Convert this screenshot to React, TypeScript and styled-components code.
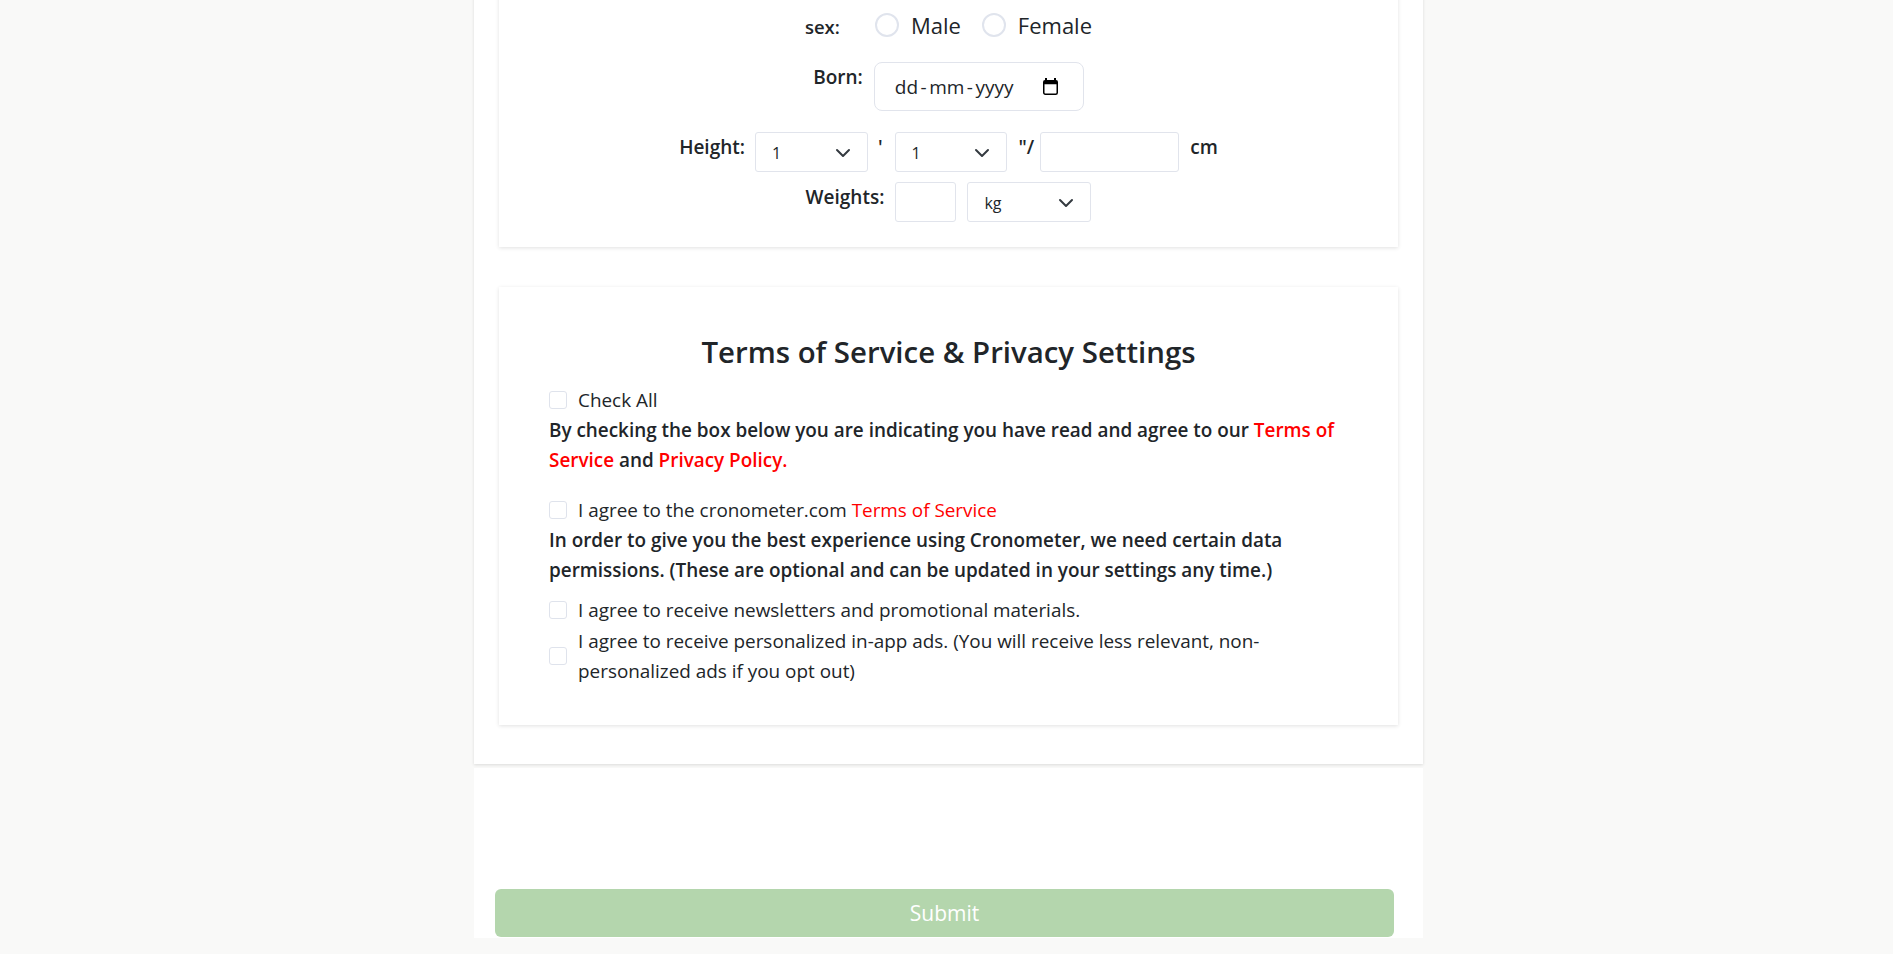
import React from "react";
import styled, { createGlobalStyle } from "styled-components";

const GlobalStyle = createGlobalStyle`
  html, body { margin: 0; padding: 0; }
  body {
    background: #f9f9f8;
    font-family: "Open Sans", "Noto Sans", Arial, sans-serif;
    color: #212529;
    overflow: hidden;
  }
  * { box-sizing: border-box; }
`;

const Page = styled.main`
  display: flex;
  flex-direction: column;
  align-items: center;
  margin-top: -20px;
  padding-left: 4px;
`;

const Panel = styled.section`
  width: 949px;
  background: #fff;
  box-shadow: 0 1px 3px rgba(0, 0, 0, 0.12);
  padding: 0 25px 39px;
`;

const Card = styled.div<{ $mt?: number }>`
  background: #fff;
  box-shadow: 0 1px 4px rgba(0, 0, 0, 0.12);
  margin-top: ${(p) => p.$mt ?? 0}px;
`;

const ProfileCard = styled(Card)`
  padding: 20px 0 25px;
`;

const Row = styled.div<{ $mt?: number }>`
  display: flex;
  justify-content: center;
  align-items: flex-start;
  margin-top: ${(p) => p.$mt ?? 0}px;
`;

const SexRow = styled(Row)`
  align-items: center;
  height: 50px;
`;

const Label = styled.span<{ $mr?: number; $ml?: number }>`
  font-size: 19px;
  font-weight: 600;
  line-height: 27px;
  padding-top: 2px;
  margin-right: ${(p) => p.$mr ?? 10}px;
  margin-left: ${(p) => p.$ml ?? 0}px;
  white-space: pre;
`;

const SexLabel = styled(Label)`
  font-size: 18.5px;
  padding-top: 0;
  margin-right: 35px;
  margin-top: 3px;
`;

const RadioOption = styled.label<{ $mr?: number }>`
  display: flex;
  align-items: center;
  gap: 12px;
  margin-right: ${(p) => p.$mr ?? 0}px;
  font-size: 22px;
  font-weight: 500;
`;

const RadioCircle = styled.span`
  width: 24px;
  height: 24px;
  border-radius: 50%;
  border: 2px solid #e0e4ed;
  background: #fff;
`;

const DateBox = styled.div`
  width: 210px;
  height: 49px;
  border: 1px solid #e1e4ec;
  border-radius: 8px;
  display: flex;
  align-items: center;
  justify-content: space-between;
  padding: 0 24px 0 20px;
  font-size: 19px;
  color: #212529;
`;

const DateSep = styled.span`
  margin: 0 2.5px;
`;

const SelectBox = styled.div<{ $w: number }>`
  width: ${(p) => p.$w}px;
  height: 40px;
  border: 1px solid #e1e4ec;
  border-radius: 3px;
  display: flex;
  align-items: center;
  justify-content: space-between;
  padding: 1px 16px 0 16px;
  font-size: 16px;
  color: #212529;
`;

const TextBox = styled.div<{ $w: number; $mr?: number }>`
  width: ${(p) => p.$w}px;
  height: 40px;
  border: 1px solid #e1e4ec;
  border-radius: 3px;
  margin-right: ${(p) => p.$mr ?? 0}px;
`;

const TermsCard = styled(Card)`
  padding: 47px 50px 39px;
`;

const Title = styled.h2`
  margin: 0 0 15px;
  text-align: center;
  font-size: 29.4px;
  font-weight: 600;
  line-height: 36px;
  color: #212529;
`;

const CheckRow = styled.label<{ $mt?: number }>`
  display: flex;
  align-items: center;
  margin-top: ${(p) => p.$mt ?? 0}px;
  font-size: 18.9px;
  line-height: 30px;
  color: #212529;
`;

const CheckBox = styled.span`
  flex: none;
  width: 18px;
  height: 18px;
  border: 1px solid #dfe3ec;
  border-radius: 3px;
  margin-right: 11px;
  background: #fff;
`;

const Notice = styled.p`
  margin: 0;
  font-size: 18.9px;
  font-weight: 600;
  line-height: 30px;
  color: #212529;
`;

const Red = styled.span`
  color: #ff0000;
`;

const Footer = styled.div`
  width: 949px;
  height: 170px;
  margin-top: 4px;
  background: #fff;
  display: flex;
  align-items: flex-end;
  padding: 0 0 1px 21px;
`;

const SubmitButton = styled.button`
  width: 899px;
  height: 48px;
  border: none;
  border-radius: 6px;
  background: #b4d6ad;
  color: #fff;
  font-family: "Open Sans", sans-serif;
  font-size: 21px;
  cursor: default;
`;

const Chevron = () => (
  <svg width="16" height="16" viewBox="0 0 16 16" fill="none">
    <path d="m2 5 6 6 6-6" stroke="#343a40" strokeWidth="2" strokeLinecap="round" strokeLinejoin="round" />
  </svg>
);

const CalendarIcon = () => (
  <svg width="17" height="17" viewBox="0 0 17 17">
    <rect x="3" y="0" width="2" height="3" fill="#000" />
    <rect x="12" y="0" width="2" height="3" fill="#000" />
    <rect x="1.75" y="2.75" width="13.5" height="13.5" rx="1.5" fill="none" stroke="#000" strokeWidth="1.5" />
    <rect x="1.75" y="2.75" width="13.5" height="3.5" fill="#000" />
  </svg>
);

export default function App() {
  return (
    <>
      <GlobalStyle />
      <Page>
        <Panel>
          <ProfileCard>
            <SexRow>
              <SexLabel>sex:</SexLabel>
              <RadioOption $mr={21}>
                <RadioCircle />
                Male
              </RadioOption>
              <RadioOption>
                <RadioCircle />
                Female
              </RadioOption>
            </SexRow>
            <Row $mt={12}>
              <Label $mr={11}>Born:</Label>
              <DateBox>
                <span>
                  dd<DateSep>-</DateSep>mm<DateSep>-</DateSep>yyyy
                </span>
                <CalendarIcon />
              </DateBox>
            </Row>
            <Row $mt={21}>
              <Label>Height:</Label>
              <SelectBox $w={113}>
                <span>1</span>
                <Chevron />
              </SelectBox>
              <Label $ml={10} $mr={12}>'</Label>
              <SelectBox $w={112}>
                <span>1</span>
                <Chevron />
              </SelectBox>
              <Label $ml={12} $mr={6}>"/</Label>
              <TextBox $w={139} />
              <Label $ml={11} $mr={0}>cm</Label>
            </Row>
            <Row $mt={10}>
              <Label $mr={11}>Weights:</Label>
              <TextBox $w={61} $mr={11} />
              <SelectBox $w={124}>
                <span>kg</span>
                <Chevron />
              </SelectBox>
            </Row>
          </ProfileCard>

          <TermsCard $mt={40}>
            <Title>Terms of Service &amp; Privacy Settings</Title>
            <CheckRow>
              <CheckBox />
              Check All
            </CheckRow>
            <Notice>
              By checking the box below you are indicating you have read and agree to our <Red>Terms of</Red>{" "}
              <Red>Service</Red> and <Red>Privacy Policy.</Red>
            </Notice>
            <CheckRow $mt={20}>
              <CheckBox />
              <span>
                I agree to the cronometer.com <Red>Terms of Service</Red>
              </span>
            </CheckRow>
            <Notice>
              In order to give you the best experience using Cronometer, we need certain data permissions. (These are
              optional and can be updated in your settings any time.)
            </Notice>
            <CheckRow $mt={10}>
              <CheckBox />
              I agree to receive newsletters and promotional materials.
            </CheckRow>
            <CheckRow $mt={1}>
              <CheckBox />
              <span>
                I agree to receive personalized in-app ads. (You will receive less relevant, non-personalized ads if you
                opt out)
              </span>
            </CheckRow>
          </TermsCard>
        </Panel>
        <Footer>
          <SubmitButton type="button">Submit</SubmitButton>
        </Footer>
      </Page>
    </>
  );
}
